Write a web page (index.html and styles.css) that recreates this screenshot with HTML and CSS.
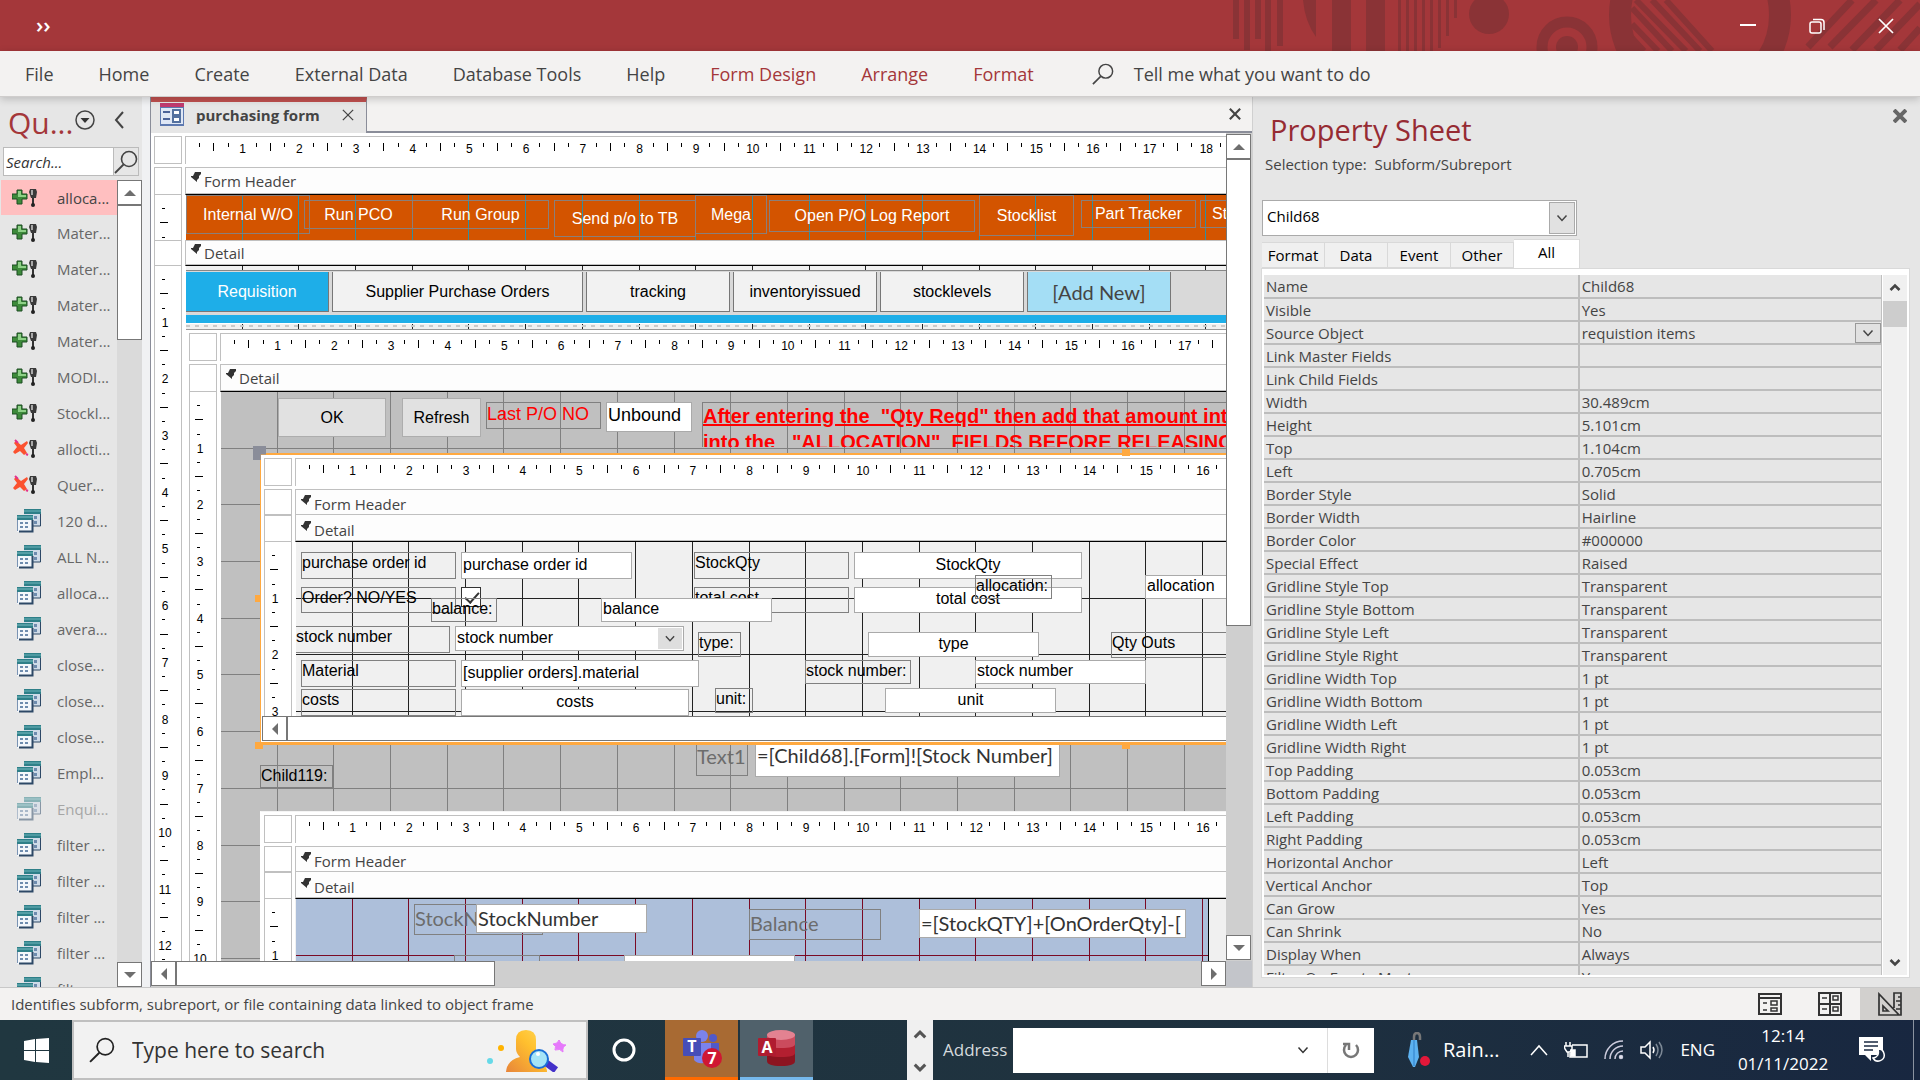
FILE: index.html
```html
<!DOCTYPE html>
<html lang="en">
<head>
<meta charset="utf-8">
<title>purchasing form</title>
<link rel="stylesheet" href="styles.css">
</head>
<body>
<svg class="sprite" aria-hidden="true">
  <symbol id="i-append" viewBox="0 0 26 20">
    <path d="M5 2h5v4h5v5h-5v5H5v-5H0V6h5z" fill="#3d8a3a" stroke="#1d4d22"/>
    <path d="M6 3h3v4h5v2H6z" fill="#8ed087"/>
    <path d="M18 1h6l1 3-1 6h-5l-2-6z" fill="#3a3a3a"/><path d="M19 2h2v5h-2z" fill="#a9a9a9"/>
    <path d="M21 10v6" stroke="#333" stroke-width="2"/><circle cx="21" cy="17" r="2" fill="#222"/>
  </symbol>
  <symbol id="i-delete" viewBox="0 0 26 20">
    <path d="M4 2l5 4 6-4 1 2-4 5 3 5-3 2-4-4-5 3-2-2 4-5-3-4z" fill="#fb5230"/>
    <path d="M3 1l3 3M14 15l2 1" stroke="#e3318c" stroke-width="2"/>
    <path d="M18 1h6l1 3-1 6h-5l-2-6z" fill="#3a3a3a"/><path d="M19 2h2v5h-2z" fill="#a9a9a9"/>
    <path d="M21 10v6" stroke="#333" stroke-width="2"/><circle cx="21" cy="17" r="2" fill="#222"/>
  </symbol>
  <symbol id="i-select" viewBox="0 0 24 24">
    <path d="M7 0h17v17H7z" fill="#cfdbe8"/><path d="M7 0h17v5H7z" fill="#2e7f88"/><path d="M7 2h17" stroke="#6fb6bb"/>
    <path d="M23.500 5v12H12" stroke="#2d4866" fill="none"/><path d="M17 7h3v3h-3zM17 12h3v3h-3z" fill="#6e8cae"/>
    <path d="M0 6h16v17H0z" fill="#f3f7fb"/><path d="M0 6h16v5H0z" fill="#2e7f88"/><path d="M0 8h16" stroke="#7cbfc3"/>
    <path d="M3 13h3v2H3zM8 13h3v2H8zM3 17h3v2H3zM8 17h3v2H8z" fill="#6e8cae"/>
    <path d="M15.500 11v11.500H2" stroke="#2d4866" fill="none" stroke-width="2"/><path d="M.5 11v11" stroke="#7a93b3"/>
  </symbol>
  <symbol id="i-form" viewBox="0 0 24 24">
    <path d="M0 1h24v22H0z" fill="#5d79b0"/><path d="M1 5h22v16H1z" fill="#dfe7f5"/><path d="M0 0h24v4H0z" fill="#c13a6e"/>
    <path d="M3 9h7M3 16h7" stroke="#4a6299" stroke-width="2"/>
    <path d="M13 7h7v5h-7zM13 14h7v5h-7z" fill="#fff" stroke="#54719f" stroke-width="2"/>
  </symbol>
  <symbol id="i-lens" viewBox="0 0 24 24"><circle cx="15" cy="9" r="7.500" fill="none" stroke="currentColor" stroke-width="1.600"/><path d="M9.500 14.500L1 23" stroke="currentColor" stroke-width="1.800"/></symbol>
  <symbol id="i-down" viewBox="0 0 12 12"><path d="M1.500 3.500L6 8.500l4.500-5" fill="none" stroke="currentColor" stroke-width="1.500"/></symbol>
  <symbol id="i-chev" viewBox="0 0 12 12"><path d="M1.500 4L6 8.500 10.500 4" fill="none" stroke="currentColor" stroke-width="2.600"/></symbol>
  <symbol id="i-tri" viewBox="0 0 12 12"><path d="M0 3h12L6 9z" fill="#6e6e6e"/></symbol>
  <symbol id="i-band" viewBox="0 0 10 10"><path d="M4 0h6v2L8 4v2L6 8v2L0 5V4h2z" fill="#333"/></symbol>
  <symbol id="i-x" viewBox="0 0 14 14"><path d="M1 1l12 12M13 1L1 13" stroke="currentColor" fill="none"/></symbol>
</svg>

<header class="titlebar">
  <button class="more" aria-label="Customise toolbar">››</button>
  <svg class="pattern" width="687" height="51" viewBox="1233 0 687 51" fill="#8a3336" aria-hidden="true">
    <path d="M1233 0h6v39h-6zM1244 0h6v50h-6zM1255 0h6v39h-6zM1265 0h6v51h-6zM1277 0h6v46h-6zM1332 0h19v51h-19zM1366 0h19v51h-19zM1398 0h3v51h-3zM1406 0h3v51h-3zM1414 0h3v51h-3zM1422 0h3v51h-3zM1430 0h3v51h-3zM1438 0h3v48h-3zM1446 0h3v36h-3zM1454 0h3v18h-3z"/>
    <path d="M1303 0q2 22 13 37V0z"/>
    <circle cx="1489" cy="14" r="20"/>
    <circle cx="1567" cy="47" r="25" fill="none" stroke="#8a3336" stroke-width="11"/><circle cx="1567" cy="47" r="11"/>
    <circle cx="1700" cy="15" r="80" fill="none" stroke="#8a3336" stroke-width="22"/>
    <path d="M1632 8L1672 51M1632 24L1658 51M1632 38L1644 51M1636 0L1686 51M1652 0L1700 51M1666 0L1712 51" stroke="#8a3336" stroke-width="6"/>
    <path d="M1852 0L1808 47M1876 0L1830 47M1900 0L1852 50M1920 4L1876 50M1920 28L1900 50" stroke="#8a3336" stroke-width="7"/>
  </svg>
  <div class="winbtns">
    <button aria-label="Minimise"><svg width="16" height="16"><path d="M0 7h16" stroke="#fff" stroke-width="2"/></svg></button>
    <button aria-label="Restore"><svg width="16" height="16" fill="none" stroke="#fff" stroke-width="1.500"><rect x="1" y="4" width="11" height="11" rx="2"/><path d="M4 1.500h8a3 3 0 0 1 3 3V12"/></svg></button>
    <button aria-label="Close"><svg width="16" height="16" stroke="#fff" stroke-width="1.700"><path d="M1 1l14 14M15 1L1 15"/></svg></button>
  </div>
</header>

<nav class="menubar">
  <a href="#">File</a><a href="#">Home</a><a href="#">Create</a><a href="#">External Data</a><a href="#">Database Tools</a><a href="#">Help</a>
  <a href="#" class="ctx">Form Design</a><a href="#" class="ctx">Arrange</a><a href="#" class="ctx">Format</a>
  <button class="tellme"><svg width="22" height="22"><use href="#i-lens"/></svg>Tell me what you want to do</button>
</nav>

<main class="work">
  <aside class="nav">
    <div class="nav-head">
      <h2>Qu...</h2>
      <button aria-label="Object filter"><svg width="20" height="20"><circle cx="10" cy="10" r="9" fill="none" stroke="#444" stroke-width="1.500"/><path d="M5.500 8h9L10 13z" fill="#333"/></svg></button>
      <button aria-label="Collapse pane"><svg width="10" height="18"><path d="M9 1L2 9l7 8" fill="none" stroke="#444" stroke-width="2"/></svg></button>
    </div>
    <div class="nav-search"><input type="text" placeholder="Search..." aria-label="Search objects"><button aria-label="Search"><svg width="24" height="26"><use href="#i-lens"/></svg></button></div>
    <div class="nav-body">
      <ul>
        <li class="on"><svg><use href="#i-append"/></svg>alloca...</li>
        <li><svg><use href="#i-append"/></svg>Mater...</li>
        <li><svg><use href="#i-append"/></svg>Mater...</li>
        <li><svg><use href="#i-append"/></svg>Mater...</li>
        <li><svg><use href="#i-append"/></svg>Mater...</li>
        <li><svg><use href="#i-append"/></svg>MODI...</li>
        <li><svg><use href="#i-append"/></svg>Stockl...</li>
        <li><svg><use href="#i-delete"/></svg>allocti...</li>
        <li><svg><use href="#i-delete"/></svg>Quer...</li>
        <li class="sel"><svg><use href="#i-select"/></svg>120 d...</li>
        <li class="sel"><svg><use href="#i-select"/></svg>ALL N...</li>
        <li class="sel"><svg><use href="#i-select"/></svg>alloca...</li>
        <li class="sel"><svg><use href="#i-select"/></svg>avera...</li>
        <li class="sel"><svg><use href="#i-select"/></svg>close...</li>
        <li class="sel"><svg><use href="#i-select"/></svg>close...</li>
        <li class="sel"><svg><use href="#i-select"/></svg>close...</li>
        <li class="sel"><svg><use href="#i-select"/></svg>Empl...</li>
        <li class="sel dim"><svg><use href="#i-select"/></svg>Enqui...</li>
        <li class="sel"><svg><use href="#i-select"/></svg>filter ...</li>
        <li class="sel"><svg><use href="#i-select"/></svg>filter ...</li>
        <li class="sel"><svg><use href="#i-select"/></svg>filter ...</li>
        <li class="sel"><svg><use href="#i-select"/></svg>filter ...</li>
        <li class="sel"><svg><use href="#i-select"/></svg>filter ...</li>
      </ul>
      <div class="vbar"><button aria-label="Up"><svg class="up"><use href="#i-tri"/></svg></button><i class="thumb nav-thumb"></i><button class="end" aria-label="Down"><svg><use href="#i-tri"/></svg></button></div>
    </div>
  </aside>

  <section class="doc">
    <div class="doctabs">
      <div class="doctab"><svg width="24" height="24"><use href="#i-form"/></svg><b>purchasing form</b><button aria-label="Close tab"><svg width="12" height="12" stroke-width="1.500"><use href="#i-x"/></svg></button></div>
      <button class="docclose" aria-label="Close document"><svg width="12" height="12" stroke-width="2.500"><use href="#i-x"/></svg></button>
    </div>
    <div class="view">
      <div class="design root">
        <i class="corner"></i>
        <div class="hruler"><span>1</span><span>2</span><span>3</span><span>4</span><span>5</span><span>6</span><span>7</span><span>8</span><span>9</span><span>10</span><span>11</span><span>12</span><span>13</span><span>14</span><span>15</span><span>16</span><span>17</span><span>18</span></div>
        <i class="gut"></i><div class="band tall"><svg><use href="#i-band"/></svg>Form Header</div>
        <div class="vruler"></div>
        <div class="canvas head-canvas">
          <button class="cmd b-int">Internal W/O</button><button class="cmd b-pco">Run PCO</button><button class="cmd b-grp">Run Group</button><button class="cmd b-tb">Send p/o to TB</button><button class="cmd b-mega">Mega</button><button class="cmd b-log">Open P/O Log Report</button><button class="cmd b-stk">Stocklist</button><button class="cmd b-part">Part Tracker</button><button class="cmd b-st">Stock</button>
        </div>
        <i class="gut"></i><div class="band"><svg><use href="#i-band"/></svg>Detail</div>
        <div class="vruler"><span>1</span><span>2</span><span>3</span><span>4</span><span>5</span><span>6</span><span>7</span><span>8</span><span>9</span><span>10</span><span>11</span><span>12</span></div>
        <div class="canvas main-canvas">
          <div class="tabs"><button class="cur">Requisition</button><button class="wide">Supplier Purchase Orders</button><button>tracking</button><button>inventoryissued</button><button>stocklevels</button><button class="new">[Add New]</button></div>
          <div class="bluebar"></div>
          <div class="dots"></div>
          <div class="design requisition">
            <i class="corner"></i>
            <div class="hruler"><span>1</span><span>2</span><span>3</span><span>4</span><span>5</span><span>6</span><span>7</span><span>8</span><span>9</span><span>10</span><span>11</span><span>12</span><span>13</span><span>14</span><span>15</span><span>16</span><span>17</span></div>
            <i class="gut"></i><div class="band tall"><svg><use href="#i-band"/></svg>Detail</div>
            <div class="vruler"><span>1</span><span>2</span><span>3</span><span>4</span><span>5</span><span>6</span><span>7</span><span>8</span><span>9</span><span>10</span></div>
            <div class="canvas req-canvas">
              <button class="std r-ok">OK</button><button class="std r-ref">Refresh</button>
              <label class="lbl r-last" for="last">Last P/O NO</label><input class="txt r-unb" id="last" value="Unbound" readonly>
              <p class="lbl r-note">After entering the&nbsp; "Qty Reqd" then add that amount into<br>into the&nbsp;&nbsp; "ALLOCATION"&nbsp; FIELDS BEFORE RELEASING</p>
              <label class="lbl r-text fut" for="t1">Text1</label><input class="txt r-expr fut" id="t1" value="=[Child68].[Form]![Stock Number]" readonly>
              <label class="lbl r-119">Child119:</label>

              <div class="design items">
                <i class="corner"></i>
                <div class="hruler"><span>1</span><span>2</span><span>3</span><span>4</span><span>5</span><span>6</span><span>7</span><span>8</span><span>9</span><span>10</span><span>11</span><span>12</span><span>13</span><span>14</span><span>15</span><span>16</span></div>
                <i class="gut"></i><div class="band flat"><svg><use href="#i-band"/></svg>Form Header</div>
                <i class="gut"></i><div class="band ruled"><svg><use href="#i-band"/></svg>Detail</div>
                <div class="vruler"><span>1</span><span>2</span><span>3</span></div>
                <div class="canvas item-canvas">
                  <label class="lbl lc y1" for="po">purchase order id</label><input class="txt tc w1 y1" id="po" value="purchase order id" readonly>
                  <label class="lbl qc y1" for="sq">StockQty</label><input class="txt vc y1 mid" id="sq" value="StockQty" readonly>
                  <label class="lbl lc y2" for="ord">Order? NO/YES</label><input type="checkbox" class="chk" id="ord" checked>
                  <label class="lbl qc y2" for="tot">total cost</label><input class="txt vc y2 mid" id="tot" value="total cost" readonly>
                  <label class="lbl s-ball" for="bal">balance:</label><input class="txt s-bal" id="bal" value="balance" readonly>
                  <label class="lbl s-alll" for="all">allocation:</label><input class="txt s-all" id="all" value="allocation" readonly>
                  <label class="lbl s-snl" for="sn">stock number</label><select class="txt s-sn" id="sn"><option>stock number</option></select><svg class="arrow"><use href="#i-down"/></svg>
                  <label class="lbl s-tyl" for="ty">type:</label><input class="txt s-ty mid" id="ty" value="type" readonly>
                  <label class="lbl s-qo">Qty Outs</label>
                  <label class="lbl lc y3" for="mat">Material</label><input class="txt tc s-mat y3" id="mat" value="[supplier orders].material" readonly>
                  <label class="lbl s-s2l" for="s2">stock number:</label><input class="txt s-s2" id="s2" value="stock number" readonly>
                  <label class="lbl lc y4" for="cost">costs</label><input class="txt tc w2 y4 mid" id="cost" value="costs" readonly>
                  <label class="lbl s-unl" for="un">unit:</label><input class="txt s-un mid" id="un" value="unit" readonly>
                </div>
                <div class="hbar"><button aria-label="Left"><svg class="left"><use href="#i-tri"/></svg></button><i class="thumb grow"></i></div>
                <i class="grab g-tl"></i><i class="grab g-l"></i><i class="grab g-bl"></i><i class="grab g-t"></i><i class="grab g-b"></i>
              </div>

              <div class="design stock">
                <i class="corner"></i>
                <div class="hruler"><span>1</span><span>2</span><span>3</span><span>4</span><span>5</span><span>6</span><span>7</span><span>8</span><span>9</span><span>10</span><span>11</span><span>12</span><span>13</span><span>14</span><span>15</span><span>16</span></div>
                <i class="gut"></i><div class="band flat"><svg><use href="#i-band"/></svg>Form Header</div>
                <i class="gut"></i><div class="band ruled"><svg><use href="#i-band"/></svg>Detail</div>
                <div class="vruler"><span>1</span></div>
                <div class="sheet"><div class="canvas stock-canvas">
                  <label class="lbl k-snl fut" for="ksn">StockNumber</label><input class="txt k-sn fut" id="ksn" value="StockNumber" readonly>
                  <label class="lbl k-ball fut" for="kb">Balance</label><input class="txt k-bal fut" id="kb" value="=[StockQTY]+[OnOrderQty]-[" readonly>
                  <i class="lbl k-l2"></i><i class="txt k-t2"></i>
                </div></div>
              </div>
            </div>
          </div>
        </div>
      </div>
      <div class="vbar main-v"><button aria-label="Up"><svg class="up"><use href="#i-tri"/></svg></button><i class="thumb v-thumb"></i><button class="end" aria-label="Down"><svg><use href="#i-tri"/></svg></button></div>
      <div class="hbar main-h"><button aria-label="Left"><svg class="left"><use href="#i-tri"/></svg></button><i class="thumb h-thumb"></i><button class="end" aria-label="Right"><svg class="right"><use href="#i-tri"/></svg></button></div>
      <i class="sizer"></i>
    </div>
  </section>

  <aside class="props">
    <button class="pclose" aria-label="Close property sheet"><svg width="14" height="14" stroke-width="4"><use href="#i-x"/></svg></button>
    <h2>Property Sheet</h2>
    <p>Selection type:&nbsp; Subform/Subreport</p>
    <div class="combo"><select aria-label="Object"><option>Child68</option></select><i><svg width="12" height="12"><use href="#i-down"/></svg></i></div>
    <div class="ptabs"><button>Format</button><button>Data</button><button>Event</button><button>Other</button><button class="on">All</button></div>
    <div class="panel">
      <div class="rows"><table>
        <tr><th>Name</th><td>Child68</td></tr>
        <tr><th>Visible</th><td>Yes</td></tr>
        <tr><th>Source Object</th><td><div class="pick">requistion items<button aria-label="Choose"><svg width="12" height="12"><use href="#i-down"/></svg></button></div></td></tr>
        <tr><th>Link Master Fields</th><td></td></tr>
        <tr><th>Link Child Fields</th><td></td></tr>
        <tr><th>Width</th><td>30.489cm</td></tr>
        <tr><th>Height</th><td>5.101cm</td></tr>
        <tr><th>Top</th><td>1.104cm</td></tr>
        <tr><th>Left</th><td>0.705cm</td></tr>
        <tr><th>Border Style</th><td>Solid</td></tr>
        <tr><th>Border Width</th><td>Hairline</td></tr>
        <tr><th>Border Color</th><td>#000000</td></tr>
        <tr><th>Special Effect</th><td>Raised</td></tr>
        <tr><th>Gridline Style Top</th><td>Transparent</td></tr>
        <tr><th>Gridline Style Bottom</th><td>Transparent</td></tr>
        <tr><th>Gridline Style Left</th><td>Transparent</td></tr>
        <tr><th>Gridline Style Right</th><td>Transparent</td></tr>
        <tr><th>Gridline Width Top</th><td>1 pt</td></tr>
        <tr><th>Gridline Width Bottom</th><td>1 pt</td></tr>
        <tr><th>Gridline Width Left</th><td>1 pt</td></tr>
        <tr><th>Gridline Width Right</th><td>1 pt</td></tr>
        <tr><th>Top Padding</th><td>0.053cm</td></tr>
        <tr><th>Bottom Padding</th><td>0.053cm</td></tr>
        <tr><th>Left Padding</th><td>0.053cm</td></tr>
        <tr><th>Right Padding</th><td>0.053cm</td></tr>
        <tr><th>Horizontal Anchor</th><td>Left</td></tr>
        <tr><th>Vertical Anchor</th><td>Top</td></tr>
        <tr><th>Can Grow</th><td>Yes</td></tr>
        <tr><th>Can Shrink</th><td>No</td></tr>
        <tr><th>Display When</th><td>Always</td></tr>
        <tr><th>Filter On Empty Master</th><td>Yes</td></tr>
      </table></div>
      <div class="pbar"><button aria-label="Up"><svg class="up"><use href="#i-chev"/></svg></button><i></i><button class="end" aria-label="Down"><svg><use href="#i-chev"/></svg></button></div>
    </div>
  </aside>
</main>

<footer class="status">
  <span>Identifies subform, subreport, or file containing data linked to object frame</span>
  <div class="views">
    <button aria-label="Form View"><svg width="24" height="22" fill="none" stroke="#333" stroke-width="2"><path d="M1 1h22v20H1zM1 5h22"/><path d="M5 10h4M5 17h4M13 8h6v4h-6zM13 15h6v3h-6z" stroke-width="1.500"/></svg></button>
    <button aria-label="Layout View"><svg width="24" height="24" fill="none" stroke="#333" stroke-width="2"><path d="M1 1h22v22H1zM12 1v22M1 12h22"/><path d="M4 6h5M4 17h5M15 4h5v4h-5zM15 15h5v4h-5z" stroke-width="1.500"/></svg></button>
    <button class="on" aria-label="Design View"><svg width="24" height="24" fill="none" stroke="#333" stroke-width="1.700"><path d="M1 2v21h20zM5 14v5h5zM16 16V1h7v22h-2M20 5h3M18 9h5M20 13h3M18 17h5"/></svg></button>
  </div>
</footer>

<footer class="taskbar">
  <button class="start" aria-label="Start"><svg width="25" height="25" fill="#fff"><path d="M0 3l11-2v11H0zM12 1l13-1v12H12zM0 13h11v11L0 22zM12 13h13v12l-13-1z"/></svg></button>
  <label class="tsearch"><svg width="26" height="26"><use href="#i-lens"/></svg><input type="text" placeholder="Type here to search">
    <svg width="82" height="44" viewBox="0 0 82 44"><defs><linearGradient id="p" x1="0" y1="1" x2="1" y2="0"><stop offset="0" stop-color="#e8853a"/><stop offset=".6" stop-color="#ffc02e"/><stop offset="1" stop-color="#ffd95a"/></linearGradient></defs>
    <circle cx="14" cy="20" r="3" fill="#ffb300"/><circle cx="3" cy="33" r="3" fill="#66d9e8"/>
    <path d="M29 12q0-10 10-10t10 10v9q0 5-5 9 16 4 16 14H19q1-12 14-15-4-4-4-8z" fill="url(#p)"/>
    <path d="M58 34l11 8" stroke="#4330c9" stroke-width="7"/><circle cx="52" cy="31" r="9" fill="#a5e4f7" stroke="#1a6fd6" stroke-width="2"/><circle cx="51" cy="26" r="2" fill="#fff"/>
    <path d="M72 12q2 5 7 5-4 2-3 7-3-4-8-2 2-4-2-6 5 0 6-4z" fill="#e679fb" stroke="#e679fb"/></svg></label>
  <button class="ring" aria-label="Cortana"><svg width="24" height="24"><circle cx="12" cy="12" r="10" fill="none" stroke="#fff" stroke-width="3"/></svg></button>
  <button class="app teams" aria-label="Teams"><svg width="40" height="40"><circle cx="20" cy="7" r="6" fill="#7b83eb"/><circle cx="31" cy="9" r="4" fill="#5059c9"/><path d="M12 14h17v13a10 10 0 0 1-17 4z" fill="#7b83eb"/><path d="M29 14h8v12h-8z" fill="#5059c9"/><rect x="1" y="9" width="18" height="18" rx="1" fill="#464eb8"/><text x="10" y="23" class="gly">T</text><circle cx="30" cy="29" r="10" fill="#cf1733"/><text x="30" y="35" class="gly">7</text></svg></button>
  <button class="app access" aria-label="Access"><svg width="40" height="40"><path d="M10 5v27q0 5 14 5t14-5V5z" fill="#8c1420"/><path d="M10 5v19q0 4 14 4t14-4V5z" fill="#b31f30"/><path d="M10 5v10q0 4 14 4t14-4V5z" fill="#cb4b5d"/><ellipse cx="24" cy="6" rx="14" ry="5" fill="#e38291"/><rect x="1" y="9" width="18" height="18" rx="1" fill="#b01c30"/><text x="10" y="24" class="gly">A</text></svg></button>
  <div class="steps"><button aria-label="Up"><svg class="up" width="14" height="14"><use href="#i-chev"/></svg></button><button aria-label="Down"><svg width="14" height="14"><use href="#i-chev"/></svg></button></div>
  <label class="addr">Address<span><input type="text"><button aria-label="History"><svg width="12" height="12"><use href="#i-down"/></svg></button><button class="re" aria-label="Refresh"><svg width="18" height="18" fill="none" stroke="#777" stroke-width="2.500"><path d="M4 4a7 7 0 1 0 10 0M1 3h6v6"/></svg></button></span></label>
  <button class="weather"><svg width="26" height="36"><path d="M9 8V5q0-4 3-4t3 4v3" fill="none" stroke="#777" stroke-width="2.500"/><path d="M6 8h6l2 17-4 10H8L3 25z" fill="#5db2f0"/><path d="M9 8v26" stroke="#2f7fc9"/><circle cx="20" cy="29" r="5" fill="#e3183a"/></svg>Rain...</button>
  <div class="tray">
    <svg width="18" height="12" fill="none" stroke="#fff" stroke-width="1.500"><path d="M1 11l8-9 8 9"/></svg>
    <svg width="24" height="18" fill="none" stroke="#fff" stroke-width="1.500"><path d="M8 4h15v12H6v-4M2 1v4M6 1v4M0 5h8v3l-2 3H3L1 8zM4 11v5"/><path d="M7 9h4v6H7z" fill="#fff"/></svg>
    <svg width="20" height="20" fill="none" stroke="#ccd" stroke-width="1.500"><path d="M1 19A18 18 0 0 1 19 1M6 19A13 13 0 0 1 19 6M11 19a8 8 0 0 1 8-8"/><circle cx="17" cy="17" r="1.500" fill="#fff"/></svg>
    <svg width="24" height="20" fill="none" stroke="#fff" stroke-width="1.500"><path d="M1 7h4l5-5v16l-5-5H1z"/><path d="M13 7q2 3 0 6"/><path d="M16 4q4 6 0 12M19 2q6 8 0 16" stroke="#7d8996"/></svg>
    <span>ENG</span>
    <time>12:14<br>01/11/2022</time>
    <svg width="26" height="26"><path d="M0 0h24v18H12v6l-6-6H0z" fill="#fff"/><path d="M5 5h14M5 9h14M5 13h9" stroke="#1b2a41" stroke-width="1.500"/><path d="M19 12a6 6 0 1 1-5 9q7-1 5-9z" fill="#1b2a41" stroke="#fff" stroke-width="1.500"/></svg>
  </div>
</footer>
</body>
</html>
```
FILE: styles.css
```css
* { box-sizing: border-box; }
body { margin: 0; height: 100vh; display: flex; flex-direction: column; overflow: hidden; font: 15px/20px "Open Sans", "Noto Sans", sans-serif; color: #444; background: #e6e6e6; }
button, input, select { font: inherit; color: inherit; border: 0; padding: 0; margin: 0; background: none; border-radius: 0; }
button { display: flex; align-items: center; justify-content: center; white-space: nowrap; }
h2, p, ul { margin: 0; padding: 0; font-weight: 400; }
a { color: inherit; text-decoration: none; }
i { display: block; }
svg { flex: none; }
.sprite { position: absolute; width: 0; height: 0; }
.up { transform: rotate(180deg); }
.left { transform: rotate(90deg); }
.right { transform: rotate(-90deg); }

.titlebar { flex: none; height: 51px; background: #a4373a; display: flex; position: relative; align-items: center; justify-content: space-between; }
.more { color: #fff; font-size: 22px; font-weight: 600; padding: 0 0 4px 36px; }
.pattern { position: absolute; right: 0; top: 0; }
.winbtns { display: flex; position: relative; }
.winbtns button { width: 69px; height: 48px; }

.menubar { flex: none; height: 46px; background: #f3f2f1; border-bottom: 1px solid #cfcdcc; display: flex; align-items: center; gap: 45px; padding-left: 25px; font-size: 18px; position: relative; box-shadow: 0 2px 8px #0003; z-index: 2; }
.ctx { color: #a4373a; }
.tellme { margin-left: 13px; gap: 20px; }

.work { flex: 1; min-height: 0; display: grid; grid-template-columns: 150px minmax(0, 1102fr) minmax(0, 668fr); }

.nav { display: flex; flex-direction: column; min-height: 0; border-right: 8px solid #f0f1f3; }
.nav-head { display: flex; align-items: center; height: 50px; padding: 0 0 4px 8px; gap: 6px; }
.nav-head h2 { font-size: 30px; line-height: 40px; color: #a4373a; width: 61px; padding-top: 5px; }
.nav-head button + button { margin-left: 13px; }
.nav-search { display: flex; margin: 0 3px 4px; border: 1px solid #bbb; height: 29px; }
.nav-search input { width: 110px; background: #fff; padding-left: 2px; font-style: italic; font-size: 15px; border-right: 1px solid #bbb; }
.nav-search input::placeholder, .tsearch input::placeholder { color: #333; opacity: 1; }
.nav-body { flex: 1; min-height: 0; display: flex; }
.nav ul { list-style: none; flex: 1; overflow: hidden; padding-left: 1px; }
.nav li { height: 36px; display: flex; align-items: center; color: #666; padding-left: 11px; gap: 19px; white-space: nowrap; }
.nav li svg { width: 26px; height: 20px; }
.nav li.sel { padding-left: 16px; gap: 16px; }
.nav li.sel svg { width: 24px; height: 24px; }
.nav li.on { background: #ffbfc0; color: #444; height: 35px; }
.nav li.dim { opacity: .5; }

.vbar { width: 25px; display: flex; flex-direction: column; background: #dadada; }
.vbar button, .hbar button { width: 25px; height: 25px; background: #fff; border: 1px solid #777; flex: none; }
.vbar svg, .hbar svg { width: 12px; height: 12px; }
.vbar .end { margin-top: auto; }
.hbar .end { margin-left: auto; }
.thumb { background: #fff; border: 1px solid #777; }
.nav-thumb { flex: 0 0 135px; }
.hbar { display: flex; background: #cfcfcf; }
.grow { flex: 1; }

.doc { display: flex; flex-direction: column; min-width: 0; min-height: 0; border-left: 1px solid #8a8d99; background: #f3f2f1; }
.doctabs { flex: none; height: 36px; display: flex; justify-content: space-between; border-bottom: 2px solid #8a8d99; }
.doctab { display: flex; align-items: center; height: 36px; width: 216px; background: #e6e6e6; border-top: 5px solid #c0504f; border-right: 1px solid #8a8d99; padding: 0 0 5px 9px; }
.doctab b { margin: 0 auto 0 12px; font-weight: 700; }
.doctab button { margin-right: 12px; }
.docclose { width: 34px; }
.view { flex: 1; min-height: 0; display: grid; grid-template: minmax(0, 1fr) 26px / minmax(0, 1fr) 26px; background: #fff; }
.main-v { padding-top: 1px; padding-bottom: 1px; width: 26px; background: #cfcfcf; }
.v-thumb { flex: 0 0 467px; width: 25px; }
.h-thumb { width: 319px; height: 25px; }
.sizer { background: #c3c5ca; }

.design { display: grid; grid-template-columns: 28px minmax(0, 1fr); column-gap: 3px; padding: 3px 0 0 3px; background: #fff; align-content: start; overflow: hidden; }
.corner, .hruler { height: 28px; border: 1px solid #c0c0c0; margin-bottom: 3px; }
.hruler { border-width: 1px 0 0 1px; padding-left: .75cm; display: flex; overflow: hidden; color: #000; font: 12px/24px "Liberation Sans", Arial, sans-serif;
  background: repeating-linear-gradient(90deg, transparent 0 calc(.375cm - 1px), #000 0 .375cm, transparent 0 calc(1.125cm - 1px), #000 0 1.125cm, transparent 0 1.5cm) 0 6px / 100% 4px no-repeat,
  repeating-linear-gradient(90deg, transparent 0 calc(.75cm - 1px), #000 0 .75cm, transparent 0 1.5cm) 0 6px / 100% 8px no-repeat; }
.hruler span { flex: 0 0 1.5cm; text-align: center; }
.vruler { border: 1px solid #c0c0c0; border-width: 0 1px; padding-top: .75cm; overflow: hidden; height: 0; min-height: 100%; color: #000; font: 12px/24px "Liberation Sans", Arial, sans-serif;
  background: repeating-linear-gradient(transparent 0 calc(.375cm - 1px), #000 0 .375cm, transparent 0 calc(1.125cm - 1px), #000 0 1.125cm, transparent 0 1.5cm) 7px 0 / 3px 100% no-repeat,
  repeating-linear-gradient(transparent 0 calc(.75cm - 1px), #000 0 .75cm, transparent 0 1.5cm) 5px 0 / 8px 100% no-repeat; }
.vruler span { display: flex; align-items: center; justify-content: center; height: 1.5cm; width: 20px; }
.gut { border: 1px solid #c0c0c0; }
.band { height: 26px; display: flex; align-items: center; gap: 3px; background: #fdfdfd; padding-left: 5px; border: 1px solid #c0c0c0; border-width: 1px 0 1px 1px; border-bottom-color: #000; box-shadow: inset 0 -1px #c0c0c0; font: 15px/20px "Open Sans", "Noto Sans", sans-serif; color: #444; }
.band svg { width: 10px; height: 10px; margin-bottom: 8px; }
.band.tall { height: 28px; }
.band.ruled { height: 27px; border-top: 0; }
.band.flat { border-bottom-color: #c0c0c0; box-shadow: none; }
.band.flat, .band.ruled { padding-top: 3px; }
.canvas { position: relative; margin-left: 1px; font: 16px/18px "Liberation Sans", Arial, sans-serif; color: #000; --grid: #222; overflow: hidden;
  background-image: repeating-linear-gradient(90deg, transparent 0 calc(1.5cm - 1px), var(--grid) 0 1.5cm), repeating-linear-gradient(transparent 0 calc(1.5cm - 1px), var(--grid) 0 1.5cm); }
.canvas > .cmd, .canvas > .std, .canvas > .lbl, .canvas > .txt, .canvas > .chk { position: absolute; }

.head-canvas { height: 45px; background-color: #d35400; --grid: #2f8ea3; }
.cmd { color: #fff; border: 1px solid #8a7f7a; }
.b-int { left: 0; top: 0; width: 124px; height: 39px; }
.b-pco { left: 118px; top: 5px; width: 109px; height: 29px; }
.b-grp { left: 226px; top: 5px; width: 137px; height: 29px; }
.b-tb { left: 368px; top: 5px; width: 142px; height: 37px; }
.b-mega { left: 509px; top: 0; width: 72px; height: 39px; }
.b-log { left: 583px; top: 5px; width: 206px; height: 32px; }
.b-stk { left: 793px; top: 0; width: 95px; height: 41px; }
.b-part { left: 895px; top: 5px; width: 115px; height: 28px; }
.b-st { left: 1014px; top: 5px; width: 64px; height: 28px; }

.main-canvas { height: 21cm; background-color: #f0f0f0; padding-top: 4px; }
.tabs { display: flex; gap: 3px; height: 45px; padding: 1px 0 3px; background: #d9d9d9; border-top: 1px solid #888; }
.tabs button { flex: 0 0 144px; background: #f2f2f2; border: 1px solid #777; border-top: 0; }
.tabs .wide { flex-basis: 251px; }
.tabs .cur { flex-basis: 143px; background: #1eaee8; color: #fff; border-left: 0; }
.tabs .new { background: #a4def5; font: 20px/24px Lato, sans-serif; color: #444; }
.bluebar { height: 8px; background: #1eaee8; }
.dots { height: 6px; border-top: 1px solid #fff; background: repeating-linear-gradient(90deg, #c9c9c9 0 4px, transparent 0 9px) 0 1px / 100% 2px no-repeat; }

.requisition { border-top: 1px solid #999; }
.req-canvas { height: 18cm; background-color: #c0c0c0; --grid: #808080; }
.lbl { border: 1px solid #808080; white-space: nowrap; overflow: hidden; line-height: 20px; }
.txt { border: 1px solid #aaa; background: #fff; padding: 0 1px 2px; }
.mid { text-align: center; }
.fut { font: 20px/24px Lato, sans-serif; color: #333; }
label.fut { color: #6c6c6c; line-height: 26px; }
.std { background: #e1e1e1; border: 1px solid #adadad; }
.r-ok { left: 57px; top: 6px; width: 108px; height: 39px; }
.r-ref { left: 181px; top: 6px; width: 79px; height: 39px; }
.r-last { left: 265px; top: 10px; width: 115px; height: 27px; color: red; font-size: 18px; line-height: 22px; }
.r-unb { left: 385px; top: 10px; width: 86px; height: 30px; font-size: 18px; padding-bottom: 4px; }
.r-note { left: 481px; top: 10px; width: 760px; height: 45px; color: red; font-size: 20px; line-height: 26px; font-weight: 700; text-decoration: underline; border-bottom: 0; }
.r-text { left: 475px; top: 345px; width: 52px; height: 39px; padding-top: 5px; }
.r-expr { left: 534px; top: 342px; width: 305px; height: 43px; }
.r-119 { left: 39px; top: 373px; width: 73px; height: 23px; }

.canvas > .items { position: absolute; left: 39px; top: 61px; width: 1300px; height: 292px; border: 1px solid #ffa940; border-width: 2px 0 3px 1px; overflow: visible; }
.item-canvas { height: 174px; background-color: #f0f0f0; }
.items .hbar { grid-column: 1 / 3; margin-left: -2px; height: 25px; }
.grab { position: absolute; width: 8px; height: 7px; background: #ffa940; }
.g-tl { left: -8px; top: -9px; width: 13px; height: 14px; background: #8a8d99; clip-path: polygon(0 0, 100% 0, 100% 60%, 60% 60%, 60% 100%, 0 100%); }
.g-l { left: -6px; top: 140px; width: 5px; }
.g-bl { left: -6px; bottom: -7px; }
.g-t { left: 861px; top: -6px; }
.g-b { left: 861px; bottom: -7px; }

.y1 { top: 10px; height: 27px; }
.y2 { top: 45px; height: 26px; }
.y3 { top: 118px; height: 27px; }
.y4 { top: 147px; height: 27px; }
.lc { left: 5px; width: 155px; }
.tc { left: 165px; }
.qc { left: 398px; width: 155px; }
.vc { left: 558px; width: 228px; }
.w1 { width: 171px; }
.w2 { width: 228px; }
.chk { left: 165px; top: 45px; width: 20px; height: 20px; appearance: none; background: #fff; border: 1px solid #333; }
.chk::after { content: ""; position: absolute; left: 6px; top: 1px; width: 6px; height: 12px; border: solid #333; border-width: 0 2px 2px 0; transform: rotate(42deg); }
.s-ball { left: 135px; top: 56px; width: 66px; height: 24px; }
.s-bal { left: 305px; top: 56px; width: 171px; height: 24px; }
.s-alll { left: 679px; top: 33px; width: 77px; height: 24px; }
.s-all { left: 849px; top: 33px; width: 171px; height: 24px; }
.s-snl { left: 0; top: 84px; width: 154px; height: 27px; border-left: 0; }
.s-sn { left: 159px; top: 84px; width: 229px; height: 25px; appearance: none; }
.arrow { position: absolute; left: 362px; top: 86px; width: 24px; height: 21px; padding: 5px; background: #dedede; color: #444; pointer-events: none; }
.s-tyl { left: 402px; top: 90px; width: 43px; height: 25px; }
.s-ty { left: 572px; top: 90px; width: 171px; height: 25px; }
.s-qo { left: 815px; top: 90px; width: 155px; height: 26px; }
.s-mat { width: 238px; }
.s-s2l { left: 509px; top: 118px; width: 106px; height: 24px; }
.s-s2 { left: 679px; top: 118px; width: 171px; height: 24px; }
.s-unl { left: 419px; top: 146px; width: 38px; height: 25px; }
.s-un { left: 589px; top: 146px; width: 171px; height: 25px; }

.canvas > .stock { position: absolute; left: 39px; top: 419px; width: 1300px; height: 300px; border: 1px solid #f4f4f4; border-left: 1px solid #fff; }
.sheet { background: #f0f0f0; }
.stock-canvas { width: 913px; height: 5cm; background-color: #adbfda; --grid: #7a0a24; border-right: 1px solid #000; }
.k-snl { left: 118px; top: 5px; width: 129px; height: 31px; }
.k-sn { left: 180px; top: 5px; width: 171px; height: 29px; }
.k-ball { left: 453px; top: 10px; width: 132px; height: 31px; }
.k-bal { left: 623px; top: 10px; width: 267px; height: 29px; }
.k-l2 { left: 158px; top: 56px; width: 86px; height: 30px; }
.k-t2 { left: 328px; top: 56px; width: 171px; height: 30px; }

.props { position: relative; display: flex; flex-direction: column; min-height: 0; padding: 13px 10px 9px 9px; border-left: 1px solid #d0d0d0; }
.props h2 { font-size: 29px; line-height: 40px; color: #962b33; padding-left: 8px; }
.props p { padding: 3px 0 25px 3px; line-height: 22px; }
.pclose { position: absolute; right: 13px; top: 12px; color: #666; }
.combo { position: relative; flex: none; width: 315px; height: 36px; background: #fff; border: 1px solid #aaa; }
.combo select { appearance: none; width: 100%; height: 30px; padding-left: 4px; color: #000; }
.combo i { position: absolute; right: 1px; top: 1px; bottom: 1px; width: 26px; display: grid; place-items: center; background: #e1e1e1; border: 1px solid #aaa; pointer-events: none; }
.ptabs { display: flex; align-items: flex-end; height: 32px; flex: none; }
.ptabs button { width: 63px; height: 26px; color: #000; background: #f0f0f0; border: 1px solid #d9d9d9; border-left-width: 0; }
.ptabs .on { width: 66px; height: 29px; padding-bottom: 4px; background: #fff; border-bottom: 0; }
.panel { flex: 1; min-height: 0; display: flex; background: #fff; border: 1px solid #d9d9d9; padding: 6px 2px 2px; margin-left: -1px; }
.rows { flex: 1; overflow: hidden; border-right: 1px solid #c0c0c0; }
.rows table { width: 100%; border-collapse: collapse; table-layout: fixed; background: #e6e6e6; }
.rows th, .rows td { height: 23px; padding: 0 2px; text-align: left; font-weight: 400; line-height: 20px; border-bottom: 2px solid #bdbdbd; }
.rows th { width: 51%; border-right: 2px solid #bdbdbd; }
.pick { display: flex; justify-content: space-between; height: 20px; margin-right: -2px; }
.pick button { width: 26px; height: 20px; background: #e1e1e1; border: 1px solid #999; }
.pbar { width: 24px; background: #f0f0f0; display: flex; flex-direction: column; align-items: stretch; margin-left: 1px; }
.pbar button { height: 26px; }
.pbar svg { width: 12px; height: 14px; }
.pbar i { height: 26px; background: #cdcdcd; }
.pbar .end { margin-top: auto; }

.status { flex: none; height: 33px; background: #f3f2f1; border-top: 1px solid #c8c8c8; display: flex; justify-content: space-between; align-items: center; padding-left: 11px; font-size: 15px; }
.views { display: flex; height: 100%; }
.views button { width: 60px; }
.views .on { background: #d2d0ce; }

.taskbar { flex: none; height: 60px; display: flex; align-items: center; color: #fff; background: linear-gradient(90deg, #203740, #1f323f 60%, #182740); }
.start { width: 72px; }
.tsearch { width: 516px; height: 60px; background: #f2f2f2; border: 2px solid #c0c0c0; color: #222; display: flex; align-items: center; gap: 17px; padding: 0 17px 0 15px; }
.tsearch input { flex: 1; min-width: 0; font-size: 21px; }
.ring { width: 72px; }
.app { width: 73px; height: 60px; border-bottom: 3px solid #ff6a00; background: #a86a33; margin-left: 2px; }
.teams { margin-left: 5px; }
.access { border-color: #76b9ed; background: #50616b; }
.gly { font: 700 16px "Open Sans", sans-serif; fill: #fff; text-anchor: middle; }
.steps { width: 26px; height: 60px; margin-left: 94px; background: #f0f0f0; color: #555; display: flex; flex-direction: column; justify-content: space-between; align-items: center; padding: 8px 0 6px; }
.addr { margin-left: 10px; display: flex; align-items: center; gap: 6px; font-size: 17px; flex: 0 0 431px; color: #d5dadd; }
.addr span { flex: 1; display: flex; height: 45px; background: #fff; color: #333; }
.addr input { flex: 1; min-width: 0; }
.addr button { width: 48px; }
.addr .re { width: 47px; border-left: 1px solid #ddd; }
.weather { margin-left: 31px; gap: 12px; font-size: 20px; }
.tray { margin-left: auto; display: flex; align-items: center; gap: 16px; font-size: 17px; padding-right: 28px; margin-right: 6px; height: 100%; border-right: 1px solid #8a93a0; }
.tray time { text-align: center; line-height: 28px; width: 104px; }
.tray time + svg { margin-left: 8px; }
```
